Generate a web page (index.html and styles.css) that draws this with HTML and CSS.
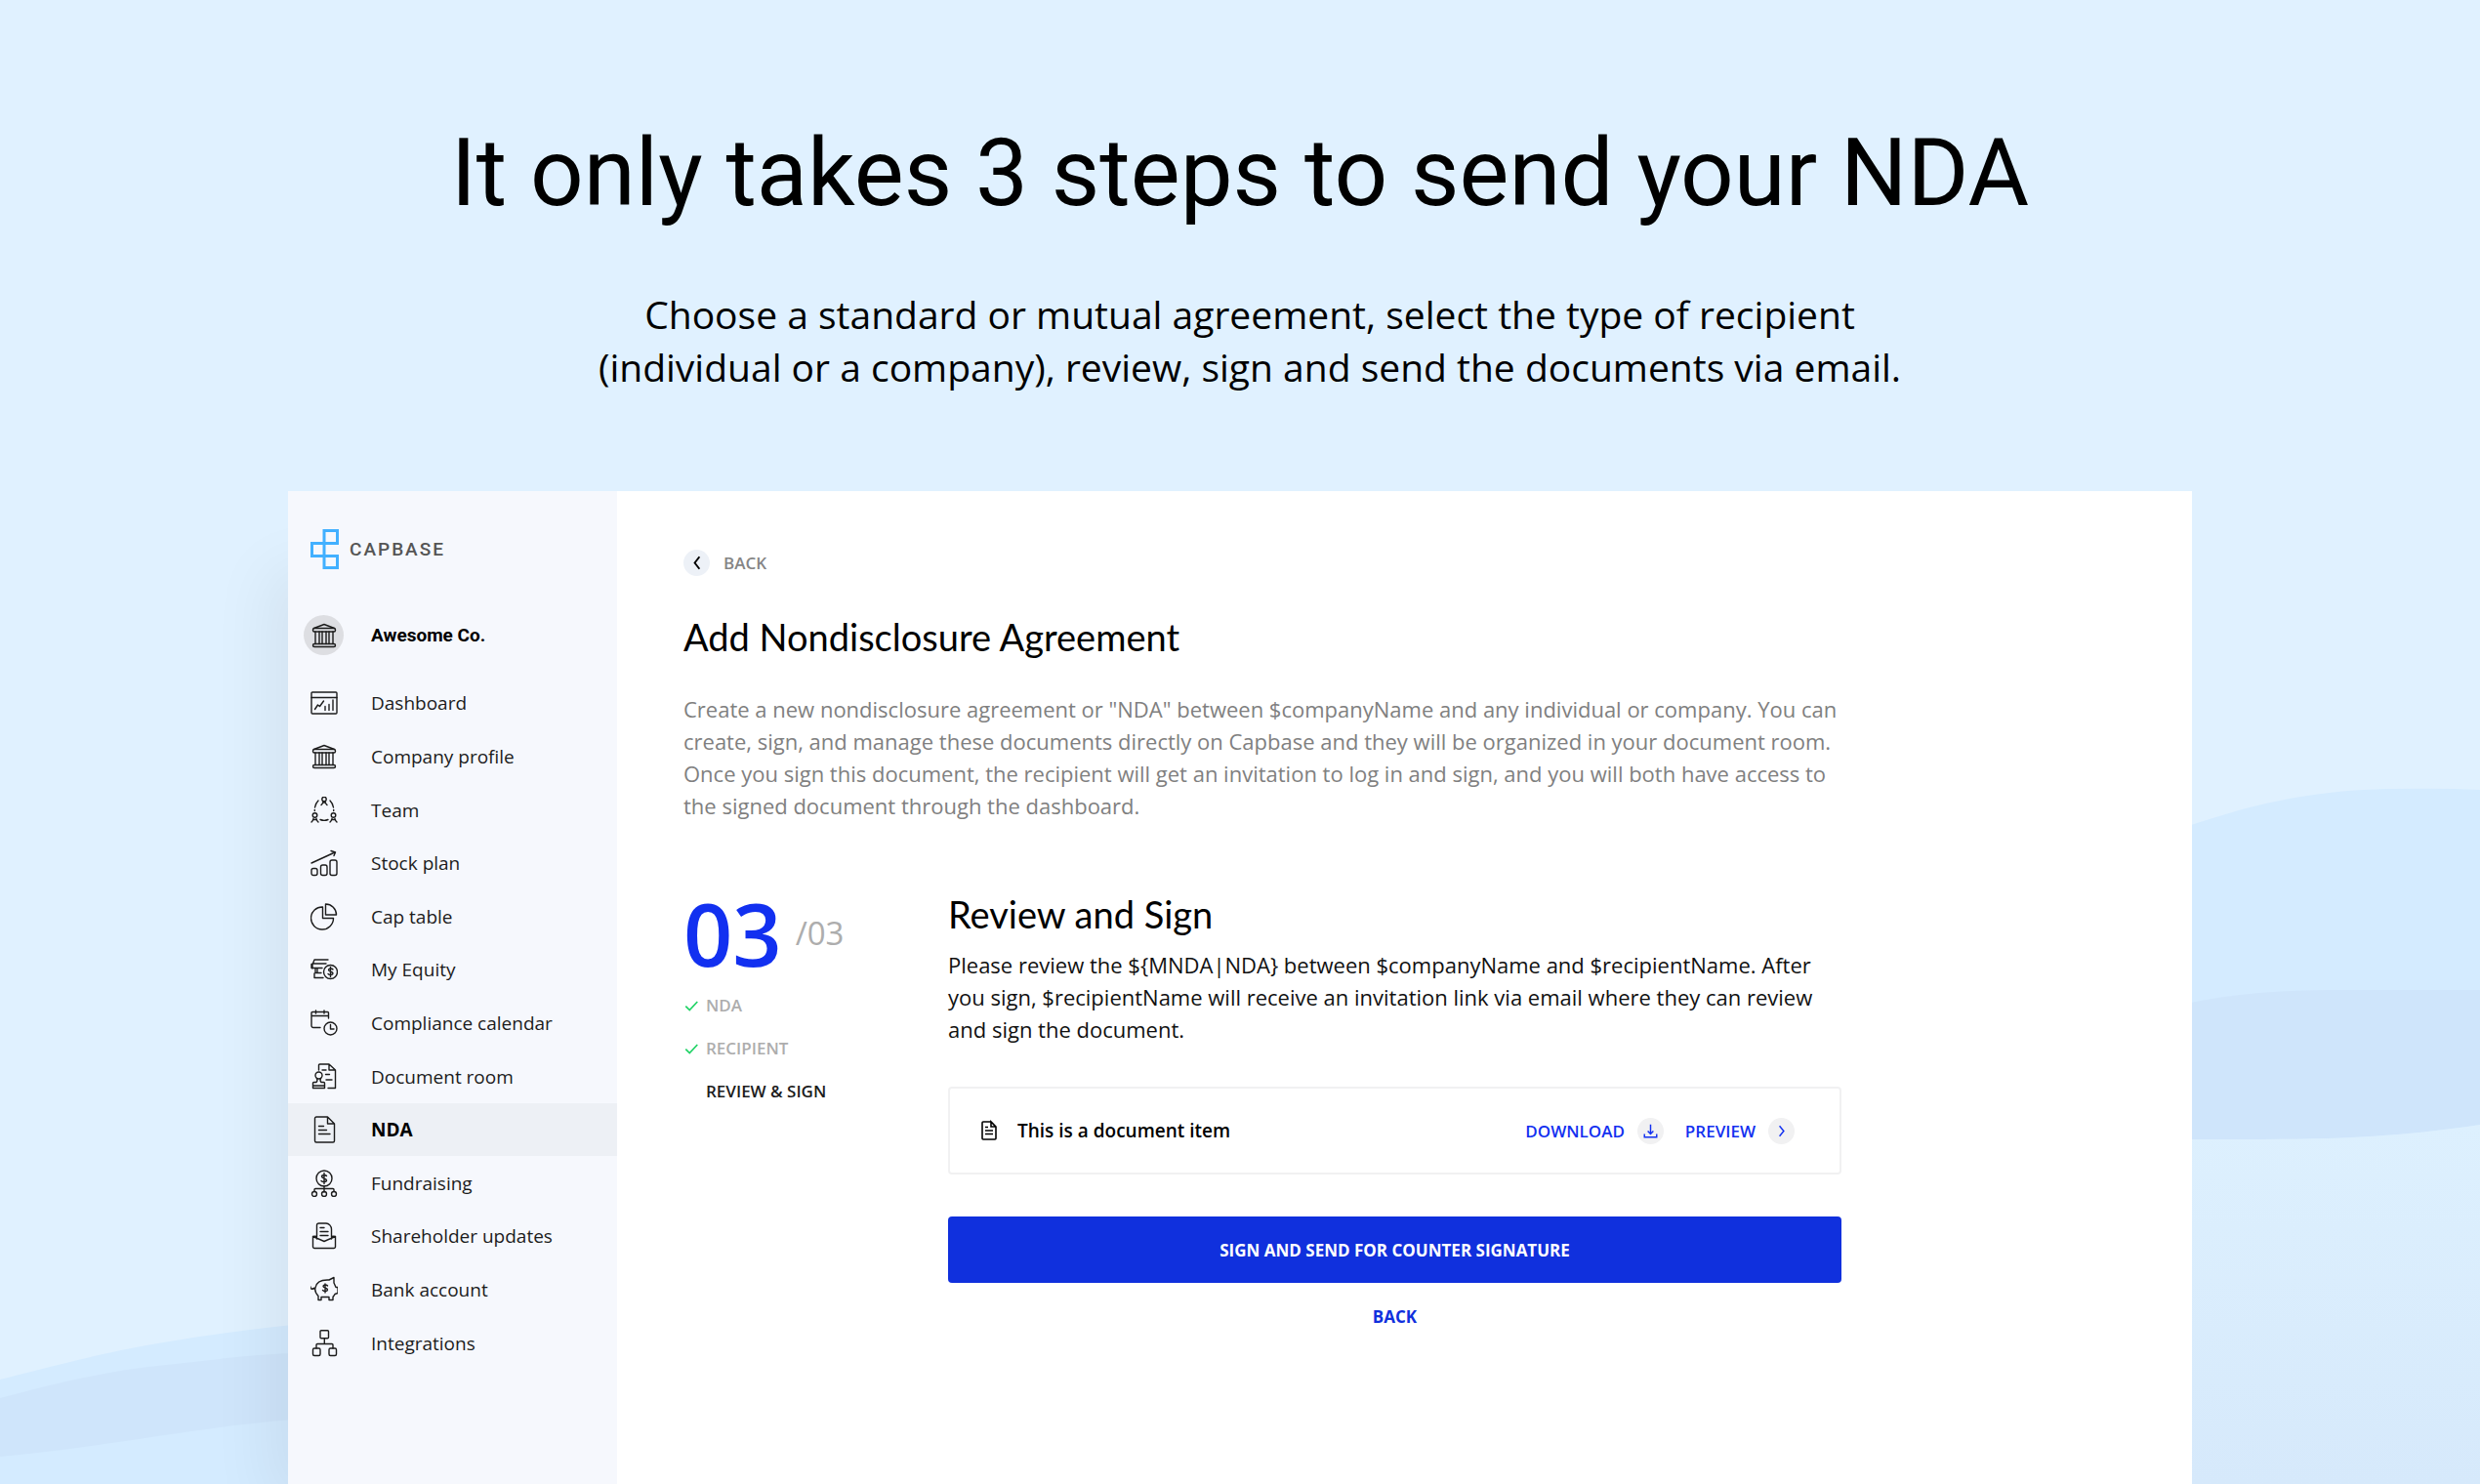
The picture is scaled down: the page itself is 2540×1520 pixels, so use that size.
FILE: index.html
```
<!DOCTYPE html>
<html lang="en">
<head>
    <meta charset="UTF-8">
    <meta name="viewport" content="width=device-width, initial-scale=1.0">
    <title>Capbase - NDA</title>
    <link rel="stylesheet" href="styles.css">
</head>
<body>
    <svg class="waves" viewBox="0 0 2540 1520" preserveAspectRatio="none" aria-hidden="true">
        <defs>
            <linearGradient id="fade" x1="0" y1="0" x2="0" y2="1">
                <stop offset="0" stop-color="#ddf0fe"/>
                <stop offset="1" stop-color="#d6e9fb"/>
            </linearGradient>
        </defs>
        <path fill="#d4ebff" d="M0 1413C60 1398 100 1387 150 1378S250 1362 300 1357C900 1290 1700 960 2244 845C2310 823 2370 809 2450 808Q2500 807 2540 809V1520H0Z"/>
        <path fill="#cfe5fb" d="M0 1432C60 1416 110 1404 170 1398S250 1388 300 1386C900 1320 1700 1100 2244 1027C2290 1018 2330 1014 2400 1014H2540V1152C2460 1164 2400 1167 2300 1167H2244L1200 1400L300 1454C200 1462 110 1482 0 1492Z"/>
        <path fill="url(#fade)" d="M2200 1167H2300C2400 1167 2460 1164 2540 1152V1520H2200Z"/>
    </svg>

    <div class="page">
        <header class="hero">
            <h1>It only takes 3 steps to send your NDA</h1>
            <p>Choose a standard or mutual agreement, select the type of recipient<br>
                (individual or a company), review, sign and send the documents via email.</p>
        </header>

        <div class="app">
            <aside class="sidebar">
                <a class="logo" href="#">
                    <svg width="29" height="41" viewBox="0 0 29 41"><path d="M14 1.5h13.500v13H14zM1.500 14.500H14v13H1.500zM14 27.500h13.500v12H14z"/></svg>
                    <span>CAPBASE</span>
                </a>

                <a class="company" href="#">
                    <span class="company-icon"><svg class="icon" viewBox="0 0 28 28"><use href="#bank"/></svg></span>
                    <span>Awesome Co.</span>
                </a>

                <nav>
                    <ul class="menu">
                        <li><a href="#">
                            <svg class="icon" viewBox="0 0 28 28"><rect x="1" y="3" width="26" height="22" rx="1"/><path d="M1 8.500h26M4.500 20.500l3-4.500 2 1.500 4-5.500M15 17.500v4M19 15.500v6M23 11v10.500"/></svg>
                            Dashboard</a></li>
                        <li><a href="#">
                            <svg class="icon" viewBox="0 0 28 28"><g id="bank"><path d="M3.500 6.500L14 2.500l10.500 4"/><rect x="2.500" y="6.500" width="23" height="3.500" rx="1.500"/><rect x="2.500" y="22.500" width="23" height="3" rx="1.500"/><path d="M5 10v12.500M9 10v12.500M12 10v12.500M16 10v12.500M19 10v12.500M23 10v12.500"/></g></svg>
                            Company profile</a></li>
                        <li><a href="#">
                            <svg class="icon" viewBox="0 0 28 28"><circle cx="14" cy="2.500" r="2.200"/><path d="M11 8.500c1-1 2-1.500 2-3.500M17 8.500c-1-1-2-1.500-2-3.500M12.500 6h3"/><circle cx="4.500" cy="19" r="2.300"/><path d="M1 26c1-1 2-1.500 2-3.500M8 26c-1-1-2-1.500-2-3.500M2.500 23.500h4"/><circle cx="23.500" cy="19" r="2.300"/><path d="M20 26c1-1 2-1.500 2-3.500M27 26c-1-1-2-1.500-2-3.500M21.500 23.500h4"/><path d="M8 4C6 6 5 8 4.500 11M4.300 13.500v1M20 4c2 2 3 4 3.500 7M23.700 13.500v1M10 23.500c3 1.300 5 1.300 8 0"/></svg>
                            Team</a></li>
                        <li><a href="#">
                            <svg class="icon" viewBox="0 0 28 28"><rect x="1" y="19.500" width="6" height="7" rx="2"/><rect x="10.500" y="16" width="6.500" height="10.500" rx="2"/><rect x="20" y="11" width="7" height="15.500" rx="2"/><path d="M1 14L25 3M21 1.500L25.500 3 24 6.500"/></svg>
                            Stock plan</a></li>
                        <li><a href="#">
                            <svg class="icon" viewBox="0 0 28 28"><path d="M12.500 4A11.500 11.500 0 1 0 23.500 15.500H12.500Z"/><path d="M15.500 1V12H26.500A11 11 0 0 0 15.500 1Z"/></svg>
                            Cap table</a></li>
                        <li><a href="#">
                            <svg class="icon" viewBox="0 0 28 28"><path d="M18 4H4L2.500 8H16M2 8v5M1 8.500v4h11M5 12.500v5h6M7 13v4M4 22.500h9M4 18v4.500"/><circle cx="20.500" cy="16.500" r="7"/><path d="M23 14c-1-1.500-4.500-1.500-4.500.5s4.500 1.500 4.500 3.500-3.500 2-5 .5M20.500 11.500v10"/></svg>
                            My Equity</a></li>
                        <li><a href="#">
                            <svg class="icon" viewBox="0 0 28 28"><path d="M10 18.500H3a2 2 0 0 1-2-2V3.500a1 1 0 0 1 1-1h15.500a1 1 0 0 1 1 1V9M1 6.500h17.500M5.500 1v3M14 1v3"/><circle cx="20.500" cy="19.500" r="6.500"/><path d="M20.500 15.500v4.500h3.500"/></svg>
                            Compliance calendar</a></li>
                        <li><a href="#">
                            <svg class="icon" viewBox="0 0 28 28"><path d="M8.500 7V2a1 1 0 0 1 1-1H19l6.500 6v18.500H18M19 1v6h6.500M12 7h4M15.500 11.500h4M16 17h6"/><circle cx="8.500" cy="12.500" r="3.500"/><path d="M6.500 15.500c1 2 .5 3-.5 4H3.500a1 1 0 0 0-1 1V23h12v-2.500a1 1 0 0 0-1-1H11c-1-1-1.500-2-.5-4M2.500 23v2.500h12V23"/></svg>
                            Document room</a></li>
                        <li class="active"><a href="#">
                            <svg class="icon" viewBox="0 0 28 28"><path d="M17.500 1H6a1.500 1.500 0 0 0-1.500 1.500v23A1.500 1.500 0 0 0 6 27H23a1.500 1.500 0 0 0 1.500-1.500V8L17.500 1v7h7M8.500 10.500h5M8.500 14.500h8M8.500 18.500h11.500"/></svg>
                            NDA</a></li>
                        <li><a href="#">
                            <svg class="icon" viewBox="0 0 28 28"><circle cx="14" cy="9" r="8"/><path d="M16.500 6.500c-1-1.500-5-1.500-5 .5s5 2 5 4-4 2-5.500.5M14 3.500v11M14 17v6M4 22v-1.500a1 1 0 0 1 1-1h18a1 1 0 0 1 1 1V22"/><circle cx="4" cy="25" r="2.500"/><circle cx="14" cy="25" r="2.500"/><circle cx="24" cy="25" r="2.500"/></svg>
                            Fundraising</a></li>
                        <li><a href="#">
                            <svg class="icon" viewBox="0 0 28 28"><path d="M6.500 17V3a2 2 0 0 1 2-2H16c3 0 5.500 3 5.500 6v10M2.500 14.500V25a1.500 1.500 0 0 0 1.500 1.500H24a1.500 1.500 0 0 0 1.500-1.500V14.500L14 19.500ZM2.500 14.500c1-.5 2-.5 4 0M25.500 14.500c-1-.5-2-.5-4 0M10 5.500h4M10 9.500h8M10 13.500h8"/></svg>
                            Shareholder updates</a></li>
                        <li><a href="#">
                            <svg class="icon" viewBox="0 0 28 28"><path d="M0 11c0 3 2.500 3 5 1C6 6 10 3.500 19 4l5-2.500v5.500l2 4.500h2v6l-3 1c-1 2-1.500 2-2 3v3h-4v-3h-8v3H8v-4C5 17 4 15 5 12L2 13"/><path d="M17.500 10c-1-1.500-4.500-1.500-4.500.5s4.500 1.500 4.500 3.500-3.500 2-5 .5M15 8v9"/></svg>
                            Bank account</a></li>
                        <li><a href="#">
                            <svg class="icon" viewBox="0 0 28 28"><rect x="10" y="0.800" width="8.500" height="8" rx="1"/><rect x="2.500" y="19" width="7.500" height="7.500" rx="1.500"/><rect x="19" y="19" width="7.500" height="7.500" rx="1.500"/><path d="M14.300 9v5M6 19v-3.500a1 1 0 0 1 1-1h15a1 1 0 0 1 1 1V19"/></svg>
                            Integrations</a></li>
                    </ul>
                </nav>
            </aside>

            <main class="content">
                <a class="back" href="#">
                    <span class="round"><svg viewBox="0 0 28 28"><path d="M17 7.500L12 14l5 6.500"/></svg></span>
                    BACK
                </a>
                <h2>Add Nondisclosure Agreement</h2>
                <p class="intro">Create a new nondisclosure agreement or "NDA" between $companyName and any individual or company. You can create, sign, and manage these documents directly on Capbase and they will be organized in your document room. Once you sign this document, the recipient will get an invitation to log in and sign, and you will both have access to the signed document through the dashboard.</p>

                <div class="wizard">
                    <section class="progress">
                        <div class="count"><strong>03</strong><span>/03</span></div>
                        <ol class="steps">
                            <li><svg viewBox="0 0 14 14"><path d="M2 7.500l3.500 3.500L12.500 3.500"/></svg>NDA</li>
                            <li><svg viewBox="0 0 14 14"><path d="M2 7.500l3.500 3.500L12.500 3.500"/></svg>RECIPIENT</li>
                            <li class="current">REVIEW &amp; SIGN</li>
                        </ol>
                    </section>

                    <section class="review">
                        <h2>Review and Sign</h2>
                        <p>Please review the ${MNDA|NDA} between $companyName and $recipientName. After you sign, $recipientName will receive an invitation link via email where they can review and sign the document.</p>

                        <div class="document">
                            <svg class="doc-icon" viewBox="0 0 18 22"><path d="M11 2H3a1 1 0 0 0-1 1v16a1 1 0 0 0 1 1h12a1 1 0 0 0 1-1V7L11 2v5h5M5 7.500h3M5 11h8M5 14.500h8"/></svg>
                            <span class="doc-name">This is a document item</span>
                            <a href="#">DOWNLOAD <span class="round"><svg viewBox="0 0 28 28"><path d="M14 7v10M11 14l3 3 3-3M7.500 17v3.500h13V17"/></svg></span></a>
                            <a href="#">PREVIEW <span class="round"><svg viewBox="0 0 28 28"><path d="M12 8.500l4.500 5.500-4.500 5.500"/></svg></span></a>
                        </div>

                        <button class="submit" type="button">SIGN AND SEND FOR COUNTER SIGNATURE</button>
                        <a class="cancel" href="#">BACK</a>
                    </section>
                </div>
            </main>
        </div>
    </div>
</body>
</html>
```
FILE: styles.css
```
* {
    box-sizing: border-box;
}

body {
    margin: 0;
    background: #e0f1ff;
    color: #000;
    font-family: 'Open Sans', 'Noto Sans', sans-serif;
}

h1, h2, p, ul, ol {
    margin: 0;
    padding: 0;
    font-weight: 400;
}

ul, ol {
    list-style: none;
}

a {
    color: inherit;
    text-decoration: none;
}

svg {
    fill: none;
    stroke: currentColor;
    flex-shrink: 0;
}

/* Background */
.waves {
    position: absolute;
    top: 0;
    left: 0;
    width: 100%;
    height: 100%;
    stroke: none;
    z-index: -1;
}

.page {
    display: flex;
    flex-direction: column;
    min-height: 100vh;
    padding-top: 117px;
}

.hero {
    text-align: center;
    margin-bottom: 100px;
}

.hero h1 {
    font-family: Roboto, sans-serif;
    font-size: 96px;
    line-height: 120px;
    margin-bottom: 58px;
}

.hero p {
    font-size: 39px;
    line-height: 54px;
    padding-left: 20px;
}

.app {
    display: flex;
    flex: 1;
    width: 100%;
    max-width: 1950px;
    margin: 0 auto;
    background: #fff;
    box-shadow: -50px 50px 60px -30px rgba(0, 0, 0, 0.06);
}

/* Sidebar */
.sidebar {
    flex: 0 0 337px;
    padding-top: 39px;
    background: #f6f8fd;
    font-size: 19px;
}

.logo {
    display: flex;
    align-items: center;
    gap: 11px;
    padding-left: 23px;
    margin-bottom: 47px;
    color: #555;
    font-family: Roboto, sans-serif;
    font-weight: 500;
    letter-spacing: 2px;
}

.logo svg {
    stroke: #42b0ff;
    stroke-width: 3;
}

.company {
    display: flex;
    align-items: center;
    gap: 28px;
    padding-left: 16px;
    margin-bottom: 22px;
    font-family: Roboto, sans-serif;
    font-weight: 700;
}

.company-icon {
    display: flex;
    align-items: center;
    justify-content: center;
    width: 41px;
    height: 41px;
    border-radius: 50%;
    background: #dddee2;
}

.icon {
    width: 28px;
    height: 28px;
    color: #1c1c1c;
    stroke-width: 1.4;
    stroke-linecap: round;
    stroke-linejoin: round;
}

.menu {
    display: flex;
    flex-direction: column;
    min-height: 710px;
}

.menu li {
    flex: 1;
    display: flex;
}

.menu a {
    flex: 1;
    display: flex;
    align-items: center;
    gap: 34px;
    padding-left: 23px;
    color: #1c1c1c;
}

.menu .active {
    background: #edf0f5;
}

.menu .active a {
    color: #000;
    font-weight: 700;
}

/* Content */
.content {
    flex: 1;
    padding: 60px 68px;
}

h2 {
    font-family: Lato, sans-serif;
    font-size: 38px;
    line-height: 48px;
}

.round {
    display: flex;
    width: 27px;
    height: 27px;
    border-radius: 50%;
    background: #f1f1f2;
}

.round svg {
    width: 27px;
    height: 27px;
    stroke-width: 1.5;
}

.back {
    display: flex;
    align-items: center;
    gap: 14px;
    width: max-content;
    margin-bottom: 38px;
    color: #858585;
    font-size: 17px;
    font-weight: 600;
}

.back .round {
    background: #edf1f7;
    color: #000;
}

.back svg {
    stroke-width: 2;
}

.intro {
    max-width: 1186px;
    margin: 34px 0 70px;
    color: #808080;
    font-size: 22px;
    line-height: 33px;
}

.wizard {
    display: flex;
    max-width: 1186px;
}

.progress {
    flex: 0 0 271px;
}

.count {
    display: flex;
    align-items: center;
    gap: 14px;
    line-height: 88px;
    margin-bottom: 8px;
}

.count strong {
    color: #1230f0;
    font-size: 88px;
    font-weight: 600;
}

.count span {
    color: #adadad;
    font-size: 33px;
}

.steps li {
    display: flex;
    align-items: center;
    gap: 7px;
    line-height: 44px;
    color: #adadad;
    font-size: 17px;
    font-weight: 600;
}

.steps svg {
    width: 16px;
    height: 16px;
    stroke: #21d366;
    stroke-width: 1.5;
}

.steps .current {
    padding-left: 23px;
    color: #1c1c1c;
}

.review {
    flex: 1;
}

.review p {
    margin: 12px 0 42px;
    color: #111;
    font-size: 22px;
    line-height: 33px;
}

.document {
    display: flex;
    align-items: center;
    height: 90px;
    padding: 0 46px 0 31px;
    border: 2px solid #f1f1f2;
    border-radius: 4px;
}

.doc-icon {
    width: 18px;
    height: 22px;
    stroke-width: 1.6;
}

.doc-name {
    flex: 1;
    padding-left: 20px;
    font-size: 19px;
    font-weight: 600;
}

.document a {
    display: flex;
    align-items: center;
    gap: 13px;
    margin-left: 22px;
    color: #1230f0;
    font-size: 17px;
    font-weight: 600;
}

.submit {
    display: block;
    width: 100%;
    height: 68px;
    margin: 43px 0 24px;
    border: none;
    border-radius: 4px;
    background: #1030dd;
    color: #fff;
    font-family: inherit;
    font-size: 17px;
    font-weight: 700;
    cursor: pointer;
}

.cancel {
    display: block;
    color: #1030dd;
    font-size: 17px;
    font-weight: 700;
    line-height: 22px;
    text-align: center;
}
```
